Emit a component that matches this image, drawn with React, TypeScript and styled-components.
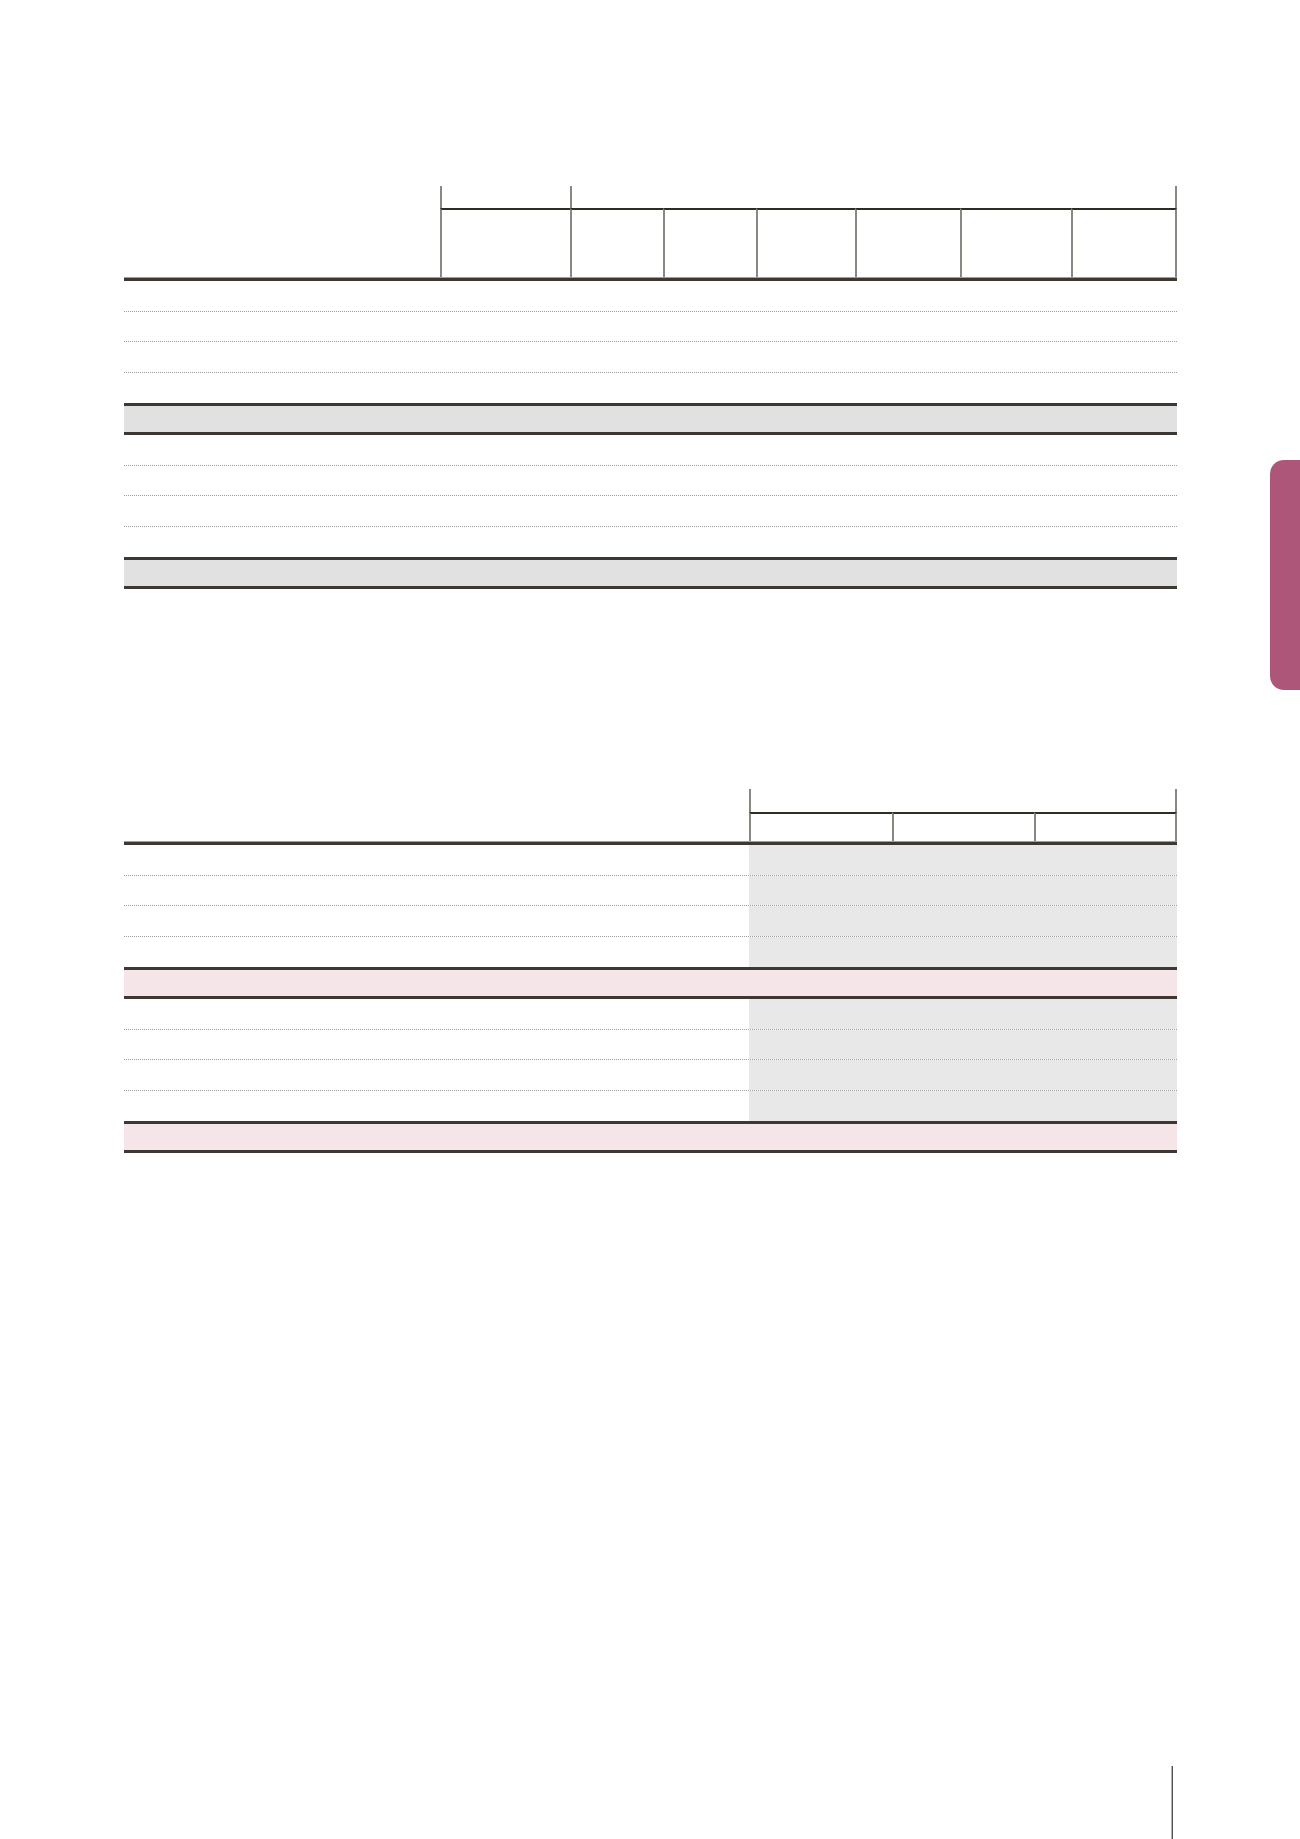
import styled, { createGlobalStyle } from 'styled-components';

const GlobalStyle = createGlobalStyle`
  html, body {
    margin: 0;
    padding: 0;
    background: #ffffff;
  }
  body {
    font-family: 'Liberation Sans', Arial, sans-serif;
  }
`;

const Page = styled.div`
  position: relative;
  width: 1300px;
  min-height: 1839px;
  box-sizing: border-box;
  padding: 186px 0 0 124px;
  display: flex;
  flex-direction: column;
  overflow: hidden;
  background: #ffffff;
`;

const Table = styled.div<{ $gap?: number }>`
  width: 1053px;
  margin-top: ${(p) => p.$gap || 0}px;
  display: flex;
  flex-direction: column;
`;

const Head = styled.div<{ $cols: string; $rows: string }>`
  display: grid;
  grid-template-columns: ${(p) => p.$cols};
  grid-template-rows: ${(p) => p.$rows};
`;

const HeadLabel = styled.div`
  grid-row: 1 / span 2;
`;

const HeadCell = styled.div<{ $span?: number; $top?: boolean; $right?: boolean }>`
  box-sizing: border-box;
  grid-column: span ${(p) => p.$span || 1};
  border-left: 2px solid #8b8781;
  border-right: ${(p) => (p.$right ? '2px solid #8b8781' : 'none')};
  border-top: ${(p) => (p.$top ? '2px solid #2f2c26' : 'none')};
`;

const Body = styled.div`
  border-top: 3px solid #3d3932;
  box-shadow: 0 -1px 0 #a29e97;
`;

const Row = styled.div<{ $cols: string; $last?: boolean }>`
  box-sizing: border-box;
  height: 30.5px;
  display: grid;
  grid-template-columns: ${(p) => p.$cols};
  border-bottom: ${(p) => (p.$last ? 'none' : '1px dotted #9c9c9c')};
`;

const Band = styled.div<{ $cols: string; $tint: string }>`
  box-sizing: border-box;
  height: 32px;
  display: grid;
  grid-template-columns: ${(p) => p.$cols};
  background: ${(p) => p.$tint};
  border-top: 3px solid #3d3932;
  border-bottom: 3px solid #3d3932;
`;

const Cell = styled.div<{ $shade?: boolean }>`
  background: ${(p) => (p.$shade ? '#e7e8e7' : 'transparent')};
`;

const Tab = styled.div`
  position: absolute;
  top: 460px;
  right: 0;
  width: 30px;
  height: 230px;
  background: #ad5679;
  border-radius: 14px 0 0 14px;
`;

const Footer = styled.div`
  margin-top: auto;
  margin-left: 1047px;
  width: 2px;
  height: 73px;
  background: #57534e;
  border-left: 1px solid #b4b0ab;
  box-sizing: border-box;
`;

const COLS_A = '316px 130px 93px 93px 99px 105px 111px 106px';
const COLS_B = '625px 143px 142px 143px';

const LAYOUT = ['row', 'row', 'row', 'last', 'band', 'row', 'row', 'row', 'last', 'band'];

function UpperTable() {
  const inner = [93, 93, 99, 105, 111, 106];
  return (
    <Table>
      <Head $cols={COLS_A} $rows="22px 70px">
        <HeadLabel />
        <HeadCell />
        <HeadCell $span={6} $right />
        <HeadCell $top />
        {inner.map((w, i) => (
          <HeadCell key={w + '-' + i} $top $right={i === inner.length - 1} />
        ))}
      </Head>
      <Body>
        {LAYOUT.map((kind, i) =>
          kind === 'band' ? (
            <Band key={i} $cols={COLS_A} $tint="#e1e1e1" />
          ) : (
            <Row key={i} $cols={COLS_A} $last={kind === 'last'} />
          ),
        )}
      </Body>
    </Table>
  );
}

function LowerTable() {
  return (
    <Table $gap={200}>
      <Head $cols={COLS_B} $rows="23px 30px">
        <HeadLabel />
        <HeadCell $span={3} $right />
        <HeadCell $top />
        <HeadCell $top />
        <HeadCell $top $right />
      </Head>
      <Body>
        {LAYOUT.map((kind, i) =>
          kind === 'band' ? (
            <Band key={i} $cols={COLS_B} $tint="#f5e5e9" />
          ) : (
            <Row key={i} $cols={COLS_B} $last={kind === 'last'}>
              <Cell />
              <Cell $shade />
              <Cell $shade />
              <Cell $shade />
            </Row>
          ),
        )}
      </Body>
    </Table>
  );
}

export default function App() {
  return (
    <>
      <GlobalStyle />
      <Page>
        <UpperTable />
        <LowerTable />
        <Tab />
        <Footer />
      </Page>
    </>
  );
}
